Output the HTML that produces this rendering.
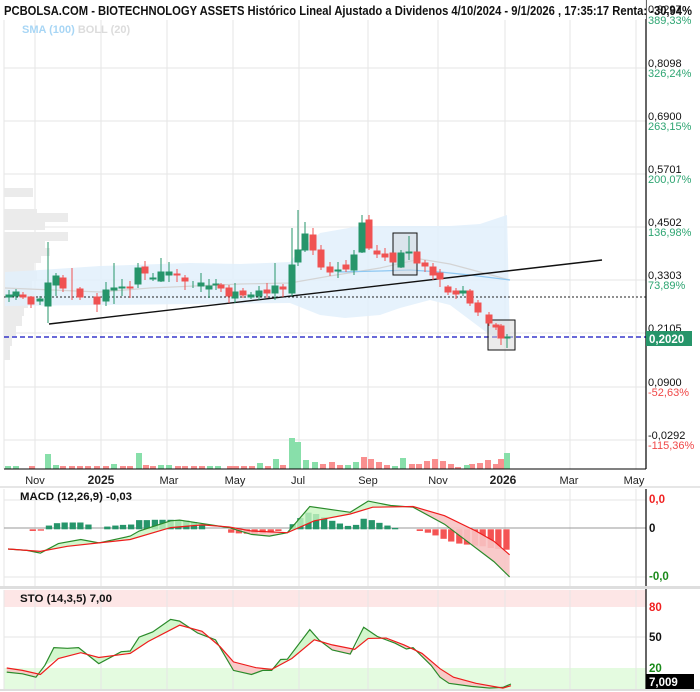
<!DOCTYPE html>
<html><head><meta charset="utf-8"><style>
html,body{margin:0;padding:0;background:#fff;width:700px;height:692px;overflow:hidden}
svg{display:block;font-family:"Liberation Sans",sans-serif}
</style></head><body>
<svg width="700" height="692" viewBox="0 0 700 692" xmlns="http://www.w3.org/2000/svg">
<g stroke="#e6e6e6" stroke-width="1">
<line x1="35" y1="20" x2="35" y2="469"/><line x1="101" y1="20" x2="101" y2="469"/><line x1="167" y1="20" x2="167" y2="469"/><line x1="233" y1="20" x2="233" y2="469"/><line x1="299" y1="20" x2="299" y2="469"/><line x1="368" y1="20" x2="368" y2="469"/><line x1="438" y1="20" x2="438" y2="469"/><line x1="505" y1="20" x2="505" y2="469"/><line x1="570" y1="20" x2="570" y2="469"/><line x1="636" y1="20" x2="636" y2="469"/>
<line x1="4" y1="68" x2="646" y2="68"/><line x1="4" y1="121" x2="646" y2="121"/><line x1="4" y1="174" x2="646" y2="174"/><line x1="4" y1="227" x2="646" y2="227"/><line x1="4" y1="280" x2="646" y2="280"/><line x1="4" y1="333" x2="646" y2="333"/><line x1="4" y1="387" x2="646" y2="387"/><line x1="4" y1="440" x2="646" y2="440"/>
<line x1="4" y1="20" x2="4" y2="469"/>
</g>
<g fill="#ebebeb">
<rect x="4" y="188" width="29" height="9"/><rect x="4" y="209" width="33" height="8"/><rect x="4" y="222" width="41" height="8"/><rect x="4" y="213" width="64" height="9"/><rect x="4" y="232" width="64" height="9"/><rect x="4" y="241" width="41" height="7"/><rect x="4" y="248" width="46" height="8"/><rect x="4" y="256" width="37" height="7"/><rect x="4" y="263" width="30" height="8"/><rect x="4" y="271" width="33" height="10"/><rect x="4" y="281" width="28" height="10"/><rect x="4" y="291" width="30" height="8"/><rect x="4" y="299" width="24" height="9"/><rect x="4" y="308" width="20" height="8"/><rect x="4" y="316" width="18" height="10"/><rect x="4" y="326" width="12" height="10"/><rect x="4" y="336" width="8" height="10"/><rect x="4" y="346" width="6" height="14"/>
</g>
<polygon fill="#e2f0fc" opacity="0.85" points="5,272 40,270 100,266 190,263 240,264 290,262 300,250 320,233 360,226 450,226 480,224 507,215 510,340 490,335 470,320 450,305 430,300 400,308 380,315 345,318 320,315 290,303 200,304 100,305 5,306"/>
<polyline fill="none" stroke="#d4d4d4" stroke-width="1.2" points="5,288 100,292 150,288 240,284 290,283 330,276 380,268 420,259 450,264 480,272 510,280"/>
<polyline fill="none" stroke="#8ec8f2" stroke-width="1.2" points="338,272 380,271 410,270 440,272 470,275 510,280"/>
<line x1="4" y1="297" x2="646" y2="297" stroke="#222" stroke-width="1" stroke-dasharray="2,2"/>
<line x1="4" y1="337" x2="646" y2="337" stroke="#1010c0" stroke-width="1.2" stroke-dasharray="5,3"/>
<line x1="49" y1="324" x2="602" y2="260" stroke="#111" stroke-width="1.4"/>
<rect x="393" y="233" width="24" height="42" fill="#cfd6dc" fill-opacity="0.5" stroke="#111" stroke-width="1"/>
<rect x="488" y="320" width="27" height="30" fill="#d8d8d8" fill-opacity="0.5" stroke="#111" stroke-width="1"/>
<g stroke-width="1">
<g stroke="#26956a" fill="#26956a">
<line x1="9" y1="290" x2="9" y2="302"/><rect x="6" y="295" width="6" height="2"/>
<line x1="16" y1="289" x2="16" y2="300"/><rect x="13" y="292" width="6" height="4"/>
<line x1="40" y1="296" x2="40" y2="305"/><rect x="37" y="299" width="6" height="2"/>
<line x1="48" y1="242" x2="48" y2="323"/><rect x="45" y="283" width="6" height="23"/>
<line x1="56" y1="273" x2="56" y2="296"/><rect x="53" y="276" width="6" height="9"/>
<line x1="106" y1="282" x2="106" y2="306"/><rect x="103" y="290" width="6" height="11"/>
<line x1="114" y1="263" x2="114" y2="304"/><rect x="111" y="288" width="6" height="2"/>
<line x1="122" y1="279" x2="122" y2="296"/><rect x="119" y="287" width="6" height="1"/>
<line x1="138" y1="263" x2="138" y2="288"/><rect x="135" y="268" width="6" height="16"/>
<line x1="153" y1="273" x2="153" y2="281"/><rect x="150" y="278" width="6" height="1"/>
<line x1="161" y1="258" x2="161" y2="282"/><rect x="158" y="272" width="6" height="9"/>
<line x1="169" y1="262" x2="169" y2="282"/><rect x="166" y="272" width="6" height="3"/>
<line x1="193" y1="281" x2="193" y2="288"/>
<line x1="201" y1="273" x2="201" y2="292"/><rect x="198" y="283" width="6" height="3"/>
<line x1="209" y1="279" x2="209" y2="298"/><rect x="206" y="286" width="6" height="3"/>
<line x1="216" y1="279" x2="216" y2="290"/><rect x="213" y="284" width="6" height="1"/>
<line x1="235" y1="283" x2="235" y2="303"/><rect x="232" y="292" width="6" height="6"/>
<line x1="251" y1="292" x2="251" y2="299"/><rect x="248" y="295" width="6" height="2"/>
<line x1="259" y1="286" x2="259" y2="300"/><rect x="256" y="291" width="6" height="5"/>
<line x1="275" y1="263" x2="275" y2="300"/><rect x="272" y="286" width="6" height="7"/>
<line x1="292" y1="228" x2="292" y2="296"/><rect x="289" y="265" width="6" height="28"/>
<line x1="298" y1="210" x2="298" y2="266"/><rect x="295" y="250" width="6" height="12"/>
<line x1="305" y1="222" x2="305" y2="252"/><rect x="302" y="234" width="6" height="16"/>
<line x1="338" y1="262" x2="338" y2="278"/><rect x="335" y="270" width="6" height="1"/>
<line x1="354" y1="250" x2="354" y2="275"/><rect x="351" y="255" width="6" height="15"/>
<line x1="362" y1="215" x2="362" y2="253"/><rect x="359" y="223" width="6" height="29"/>
<line x1="401" y1="250" x2="401" y2="268"/><rect x="398" y="253" width="6" height="14"/>
<line x1="409" y1="236" x2="409" y2="260"/><rect x="406" y="252" width="6" height="1"/>
<line x1="463" y1="286" x2="463" y2="296"/><rect x="460" y="291" width="6" height="2"/>
<line x1="507" y1="334" x2="507" y2="348"/><rect x="504" y="337" width="6" height="1"/>
</g>
<g stroke="#f05252" fill="#f05252">
<line x1="23" y1="292" x2="23" y2="299"/><rect x="20" y="295" width="6" height="2"/>
<line x1="31" y1="296" x2="31" y2="308"/><rect x="28" y="297" width="6" height="7"/>
<line x1="63" y1="275" x2="63" y2="292"/><rect x="60" y="278" width="6" height="10"/>
<line x1="72" y1="268" x2="72" y2="300"/>
<line x1="80" y1="287" x2="80" y2="300"/><rect x="77" y="289" width="6" height="8"/>
<line x1="97" y1="293" x2="97" y2="312"/><rect x="94" y="297" width="6" height="7"/>
<line x1="130" y1="281" x2="130" y2="298"/><rect x="127" y="287" width="6" height="1"/>
<line x1="145" y1="261" x2="145" y2="280"/><rect x="142" y="267" width="6" height="6"/>
<line x1="177" y1="269" x2="177" y2="282"/><rect x="174" y="274" width="6" height="1"/>
<line x1="185" y1="275" x2="185" y2="290"/><rect x="182" y="278" width="6" height="3"/>
<line x1="221" y1="283" x2="221" y2="292"/><rect x="218" y="285" width="6" height="3"/>
<line x1="229" y1="285" x2="229" y2="303"/><rect x="226" y="288" width="6" height="8"/>
<line x1="243" y1="288" x2="243" y2="298"/><rect x="240" y="291" width="6" height="4"/>
<line x1="267" y1="283" x2="267" y2="298"/><rect x="264" y="290" width="6" height="3"/>
<line x1="283" y1="284" x2="283" y2="297"/><rect x="280" y="287" width="6" height="2"/>
<line x1="313" y1="228" x2="313" y2="255"/><rect x="310" y="235" width="6" height="15"/>
<line x1="321" y1="245" x2="321" y2="270"/><rect x="318" y="250" width="6" height="17"/>
<line x1="330" y1="262" x2="330" y2="276"/><rect x="327" y="267" width="6" height="5"/>
<line x1="346" y1="260" x2="346" y2="272"/><rect x="343" y="265" width="6" height="4"/>
<line x1="369" y1="215" x2="369" y2="250"/><rect x="366" y="220" width="6" height="28"/>
<line x1="377" y1="245" x2="377" y2="258"/><rect x="374" y="251" width="6" height="3"/>
<line x1="385" y1="248" x2="385" y2="261"/><rect x="382" y="254" width="6" height="3"/>
<line x1="393" y1="253" x2="393" y2="262"/><rect x="390" y="253" width="6" height="9"/>
<line x1="417" y1="252" x2="417" y2="263"/><rect x="414" y="252" width="6" height="11"/>
<line x1="425" y1="260" x2="425" y2="272"/><rect x="422" y="263" width="6" height="3"/>
<line x1="433" y1="263" x2="433" y2="280"/><rect x="430" y="267" width="6" height="8"/>
<line x1="440" y1="269" x2="440" y2="287"/><rect x="437" y="273" width="6" height="6"/>
<line x1="448" y1="285" x2="448" y2="295"/><rect x="445" y="287" width="6" height="5"/>
<line x1="456" y1="288" x2="456" y2="299"/><rect x="453" y="291" width="6" height="3"/>
<line x1="470" y1="289" x2="470" y2="306"/><rect x="467" y="291" width="6" height="12"/>
<line x1="478" y1="300" x2="478" y2="316"/><rect x="475" y="303" width="6" height="9"/>
<line x1="489" y1="312" x2="489" y2="326"/><rect x="486" y="315" width="6" height="8"/>
<line x1="496" y1="323" x2="496" y2="330"/><rect x="493" y="325" width="6" height="2"/>
<line x1="501" y1="324" x2="501" y2="345"/><rect x="498" y="326" width="6" height="12"/>
</g>
</g>
<g fill="#f98f8f">
<rect x="29" y="466" width="6" height="3"/><rect x="60" y="466" width="6" height="3"/><rect x="69" y="466" width="6" height="3"/><rect x="77" y="466" width="6" height="3"/><rect x="85" y="466" width="6" height="3"/><rect x="94" y="466" width="6" height="3"/><rect x="103" y="466" width="6" height="3"/><rect x="120" y="466" width="6" height="3"/><rect x="127" y="466" width="6" height="3"/><rect x="143" y="465" width="6" height="4"/><rect x="150" y="466" width="6" height="3"/><rect x="175" y="466" width="6" height="3"/><rect x="182" y="466" width="6" height="3"/><rect x="191" y="466" width="6" height="3"/><rect x="199" y="466" width="6" height="3"/><rect x="227" y="466" width="6" height="3"/><rect x="233" y="466" width="6" height="3"/><rect x="241" y="466" width="6" height="3"/><rect x="249" y="466" width="6" height="3"/><rect x="265" y="466" width="6" height="3"/><rect x="280" y="465" width="6" height="4"/><rect x="320" y="464" width="6" height="5"/><rect x="329" y="462" width="6" height="7"/><rect x="337" y="465" width="6" height="4"/><rect x="361" y="457" width="6" height="12"/><rect x="368" y="459" width="6" height="10"/><rect x="376" y="462" width="6" height="7"/><rect x="384" y="465" width="6" height="4"/><rect x="409" y="464" width="6" height="5"/><rect x="416" y="464" width="6" height="5"/><rect x="424" y="461" width="6" height="8"/><rect x="432" y="459" width="6" height="10"/><rect x="440" y="461" width="6" height="8"/><rect x="448" y="464" width="6" height="5"/><rect x="455" y="467" width="6" height="2"/><rect x="469" y="464" width="6" height="5"/><rect x="477" y="463" width="6" height="6"/><rect x="485" y="460" width="6" height="9"/><rect x="493" y="464" width="5" height="5"/><rect x="498" y="459" width="6" height="10"/>
</g>
<g fill="#88dfaa">
<rect x="5" y="466" width="6" height="3"/><rect x="13" y="466" width="6" height="3"/><rect x="45" y="454" width="6" height="15"/><rect x="53" y="465" width="6" height="4"/><rect x="111" y="464" width="6" height="5"/><rect x="136" y="453" width="6" height="16"/><rect x="158" y="465" width="6" height="4"/><rect x="166" y="465" width="6" height="4"/><rect x="207" y="466" width="6" height="3"/><rect x="215" y="466" width="6" height="3"/><rect x="257" y="463" width="6" height="6"/><rect x="273" y="459" width="6" height="10"/><rect x="289" y="438" width="6" height="31"/><rect x="295" y="442" width="6" height="27"/><rect x="303" y="460" width="6" height="9"/><rect x="312" y="462" width="6" height="7"/><rect x="345" y="465" width="6" height="4"/><rect x="353" y="462" width="6" height="7"/><rect x="392" y="466" width="6" height="3"/><rect x="400" y="458" width="6" height="11"/><rect x="464" y="465" width="6" height="4"/><rect x="504" y="453" width="6" height="16"/>
</g>
<line x1="646" y1="0" x2="646" y2="469" stroke="#000" stroke-width="1.2"/>
<line x1="4" y1="469" x2="646" y2="469" stroke="#000" stroke-width="1"/>
<line x1="0" y1="487" x2="700" y2="487" stroke="#e6e6e6" stroke-width="2"/>
<rect x="0" y="0" width="646" height="19" fill="#fff" fill-opacity="0.9"/>
<text x="4" y="15" font-size="12.5" font-weight="bold" fill="#111" textLength="688" lengthAdjust="spacingAndGlyphs">PCBOLSA.COM - BIOTECHNOLOGY ASSETS Histórico Lineal Ajustado a Dividenos 4/10/2024 - 9/1/2026 , 17:35:17 Renta: -30,94%</text>
<text x="22" y="33" font-size="11" font-weight="bold"><tspan fill="#a8d6f5">SMA (100)</tspan><tspan fill="#dcdcdc"> BOLL (20)</tspan></text>
<g font-size="11" fill="#111">
<text x="648" y="13">0,9297</text>
<text x="648" y="67">0,8098</text>
<text x="648" y="120">0,6900</text>
<text x="648" y="173">0,5701</text>
<text x="648" y="226">0,4502</text>
<text x="648" y="279">0,3303</text>
<text x="648" y="332">0,2105</text>
<text x="648" y="386">0,0900</text>
<text x="648" y="439">-0,0292</text>
</g>
<g font-size="11" fill="#2ea572">
<text x="648" y="24">389,33%</text><text x="648" y="77">326,24%</text><text x="648" y="130">263,15%</text><text x="648" y="183">200,07%</text><text x="648" y="236">136,98%</text><text x="648" y="289">73,89%</text>
</g>
<g font-size="11" fill="#f04848"><text x="648" y="396">-52,63%</text><text x="648" y="449">-115,36%</text></g>
<rect x="646" y="331" width="46" height="15" fill="#26956a"/>
<text x="649" y="343" font-size="11.5" font-weight="bold" fill="#fff">0,2020</text>
<g font-size="11" fill="#222" text-anchor="middle">
<text x="35" y="484">Nov</text><text x="101" y="484" font-weight="bold" font-size="12">2025</text><text x="169" y="484">Mar</text><text x="235" y="484">May</text><text x="298" y="484">Jul</text><text x="368" y="484">Sep</text><text x="438" y="484">Nov</text><text x="503" y="484" font-weight="bold" font-size="12">2026</text><text x="569" y="484">Mar</text><text x="634" y="484">May</text>
</g>
<g stroke="#e6e6e6">
<line x1="35" y1="489" x2="35" y2="586"/><line x1="101" y1="489" x2="101" y2="586"/><line x1="167" y1="489" x2="167" y2="586"/><line x1="233" y1="489" x2="233" y2="586"/><line x1="299" y1="489" x2="299" y2="586"/><line x1="368" y1="489" x2="368" y2="586"/><line x1="438" y1="489" x2="438" y2="586"/><line x1="505" y1="489" x2="505" y2="586"/><line x1="570" y1="489" x2="570" y2="586"/><line x1="636" y1="489" x2="636" y2="586"/>
<line x1="4" y1="500" x2="646" y2="500"/><line x1="4" y1="577" x2="646" y2="577"/><line x1="4" y1="489" x2="4" y2="586"/>
</g>
<line x1="4" y1="528" x2="646" y2="528" stroke="#999" stroke-width="1"/>
<g transform="translate(0,480) scale(0.449,0.34)">
<g fill="#26956a">
<rect x="102" y="134" width="14" height="11"/><rect x="120" y="127" width="14" height="18"/><rect x="137" y="125" width="14" height="20"/><rect x="155" y="125" width="14" height="20"/><rect x="172" y="125" width="14" height="20"/><rect x="190" y="131" width="14" height="14"/><rect x="232" y="137" width="14" height="8"/><rect x="250" y="134" width="14" height="11"/><rect x="267" y="132" width="14" height="13"/><rect x="285" y="131" width="14" height="14"/><rect x="303" y="118" width="14" height="27"/><rect x="320" y="118" width="14" height="27"/><rect x="338" y="117" width="14" height="28"/><rect x="355" y="117" width="14" height="28"/><rect x="373" y="117" width="14" height="28"/><rect x="390" y="118" width="14" height="27"/><rect x="408" y="120" width="14" height="25"/><rect x="425" y="124" width="14" height="21"/><rect x="443" y="130" width="14" height="15"/><rect x="645" y="130" width="14" height="15"/><rect x="662" y="112" width="14" height="33"/><rect x="680" y="96" width="14" height="49"/><rect x="697" y="100" width="14" height="45"/><rect x="715" y="110" width="14" height="35"/><rect x="733" y="120" width="14" height="25"/><rect x="750" y="128" width="14" height="17"/><rect x="768" y="135" width="14" height="10"/><rect x="786" y="132" width="14" height="13"/><rect x="803" y="114" width="14" height="31"/><rect x="821" y="118" width="14" height="27"/><rect x="838" y="126" width="14" height="19"/><rect x="856" y="134" width="14" height="11"/><rect x="873" y="141" width="14" height="4"/>
</g>
<g fill="#f45353">
<rect x="66" y="145" width="14" height="5"/><rect x="84" y="145" width="14" height="4"/><rect x="508" y="145" width="14" height="10"/><rect x="525" y="145" width="14" height="12"/><rect x="543" y="145" width="14" height="13"/><rect x="560" y="145" width="14" height="13"/><rect x="578" y="145" width="14" height="12"/><rect x="596" y="145" width="14" height="10"/><rect x="613" y="145" width="14" height="5"/><rect x="928" y="145" width="14" height="5"/><rect x="946" y="145" width="14" height="10"/><rect x="963" y="145" width="14" height="18"/><rect x="981" y="145" width="14" height="28"/><rect x="998" y="145" width="14" height="36"/><rect x="1016" y="145" width="14" height="42"/><rect x="1033" y="145" width="14" height="45"/><rect x="1051" y="145" width="14" height="48"/><rect x="1068" y="145" width="14" height="50"/><rect x="1086" y="145" width="14" height="55"/><rect x="1103" y="145" width="14" height="58"/><rect x="1121" y="145" width="14" height="60"/>
</g>
<polygon fill="#c8f5c0" opacity="0.8" points="90,210 130,187 180,175 220,185 290,165 310,150 380,120 400,118 460,130 510,140 450,132 380,140 290,175 220,185 150,195"/>
<polygon fill="#c8f5c0" opacity="0.8" points="640,155 690,78 780,95 820,62 870,75 920,80 830,80 780,100 700,120"/>
<polygon fill="#f8c4c4" opacity="0.9" points="920,80 990,130 1040,180 1100,240 1135,285 1135,220 1100,180 1060,150 990,105"/>
<polygon fill="#f8c4c4" opacity="0.8" points="510,140 560,160 600,165 640,155 560,150"/>
<polyline fill="none" stroke="#2a8a2a" stroke-width="1.2" vector-effect="non-scaling-stroke" points="18,203 60,207 90,215 130,187 180,175 220,185 290,165 310,150 380,120 400,118 460,130 510,140 560,160 600,165 640,155 690,78 780,95 820,62 870,75 920,80 990,130 1040,180 1100,240 1135,285"/>
<polyline fill="none" stroke="#ee1c1c" stroke-width="1.2" vector-effect="non-scaling-stroke" points="18,203 90,210 150,195 220,185 290,175 380,140 450,132 510,138 560,150 640,155 700,120 780,100 830,80 920,78 990,105 1060,150 1100,180 1135,220"/>
</g>
<line x1="646" y1="489" x2="646" y2="586" stroke="#000" stroke-width="1.2"/>
<text x="20" y="500" font-size="11" font-weight="bold" fill="#111" textLength="112" lengthAdjust="spacingAndGlyphs">MACD (12,26,9)   -0,03</text>
<text x="649" y="503" font-size="11.5" font-weight="bold" fill="#f02020">0,0</text>
<text x="649" y="532" font-size="11.5" font-weight="bold" fill="#111">0</text>
<text x="649" y="580" font-size="11.5" font-weight="bold" fill="#1a8a1a">-0,0</text>
<rect x="0" y="586" width="700" height="3" fill="#dedede"/>
<rect x="4" y="590" width="642" height="17" fill="#fde6e6"/>
<rect x="4" y="668" width="642" height="21" fill="#e4fbe0"/>
<g stroke="#e6e6e6">
<line x1="35" y1="590" x2="35" y2="689"/><line x1="101" y1="590" x2="101" y2="689"/><line x1="167" y1="590" x2="167" y2="689"/><line x1="233" y1="590" x2="233" y2="689"/><line x1="299" y1="590" x2="299" y2="689"/><line x1="368" y1="590" x2="368" y2="689"/><line x1="438" y1="590" x2="438" y2="689"/><line x1="505" y1="590" x2="505" y2="689"/><line x1="570" y1="590" x2="570" y2="689"/><line x1="636" y1="590" x2="636" y2="689"/>
<line x1="4" y1="637" x2="646" y2="637"/><line x1="4" y1="590" x2="4" y2="689"/>
</g>
<g transform="translate(0,480) scale(0.449,0.34)">
<polygon fill="#c8f5c0" opacity="0.8" points="100,545 120,493 150,495 175,493 220,540 270,505 290,503 310,462 340,447 380,410 400,415 400,427 330,475 290,510 220,522 180,508 130,525"/>
<polygon fill="#f8c4c4" opacity="0.9" points="400,415 440,450 480,470 520,560 560,572 585,560 605,557 570,552 520,535 490,490 450,445 400,427"/>
<polygon fill="#c8f5c0" opacity="0.8" points="605,560 625,528 640,527 690,440 710,470 700,470 650,525"/>
<polygon fill="#f8c4c4" opacity="0.9" points="710,470 740,500 780,512 790,498 740,485"/>
<polygon fill="#c8f5c0" opacity="0.8" points="790,498 810,433 840,460 860,465 820,466"/>
<polygon fill="#f8c4c4" opacity="0.9" points="860,465 880,480 905,497 920,493 960,545 980,580 1000,598 1050,607 1090,612 1120,610 1060,598 1010,580 980,555 940,510 900,485"/>
<polygon fill="#f8c4c4" opacity="0.8" points="15,553 50,560 90,572 80,580 50,570 15,565"/>
<polyline fill="none" stroke="#2a8a2a" stroke-width="1.2" vector-effect="non-scaling-stroke" points="15,565 50,570 80,580 100,545 120,493 150,495 175,493 220,540 270,505 290,503 310,462 340,447 380,410 400,415 440,450 480,470 520,560 560,572 585,560 605,560 625,528 640,527 690,440 710,470 740,500 780,512 810,433 840,460 880,480 905,497 920,493 960,545 980,580 1000,598 1050,607 1090,612 1120,610 1138,600"/>
<polyline fill="none" stroke="#ee1c1c" stroke-width="1.2" vector-effect="non-scaling-stroke" points="15,553 50,560 90,572 130,525 180,508 220,522 290,510 330,475 400,427 450,445 490,490 520,535 570,552 605,557 650,525 700,470 740,485 790,498 820,466 860,465 900,485 940,510 980,555 1010,580 1060,598 1120,612 1138,605"/>
</g>
<line x1="646" y1="589" x2="646" y2="689" stroke="#000" stroke-width="1.2"/>
<text x="20" y="602" font-size="11" font-weight="bold" fill="#111" textLength="92" lengthAdjust="spacingAndGlyphs">STO (14,3,5)   7,00</text>
<text x="649" y="611" font-size="11.5" font-weight="bold" fill="#f02020">80</text>
<text x="649" y="641" font-size="11.5" font-weight="bold" fill="#111">50</text>
<text x="649" y="672" font-size="11.5" font-weight="bold" fill="#1a8a1a">20</text>
<rect x="646" y="674" width="48" height="15" fill="#000"/>
<text x="649" y="686" font-size="11.5" font-weight="bold" fill="#fff">7,009</text>
<line x1="0" y1="690" x2="700" y2="690" stroke="#dedede" stroke-width="2"/>
</svg>
</body></html>
